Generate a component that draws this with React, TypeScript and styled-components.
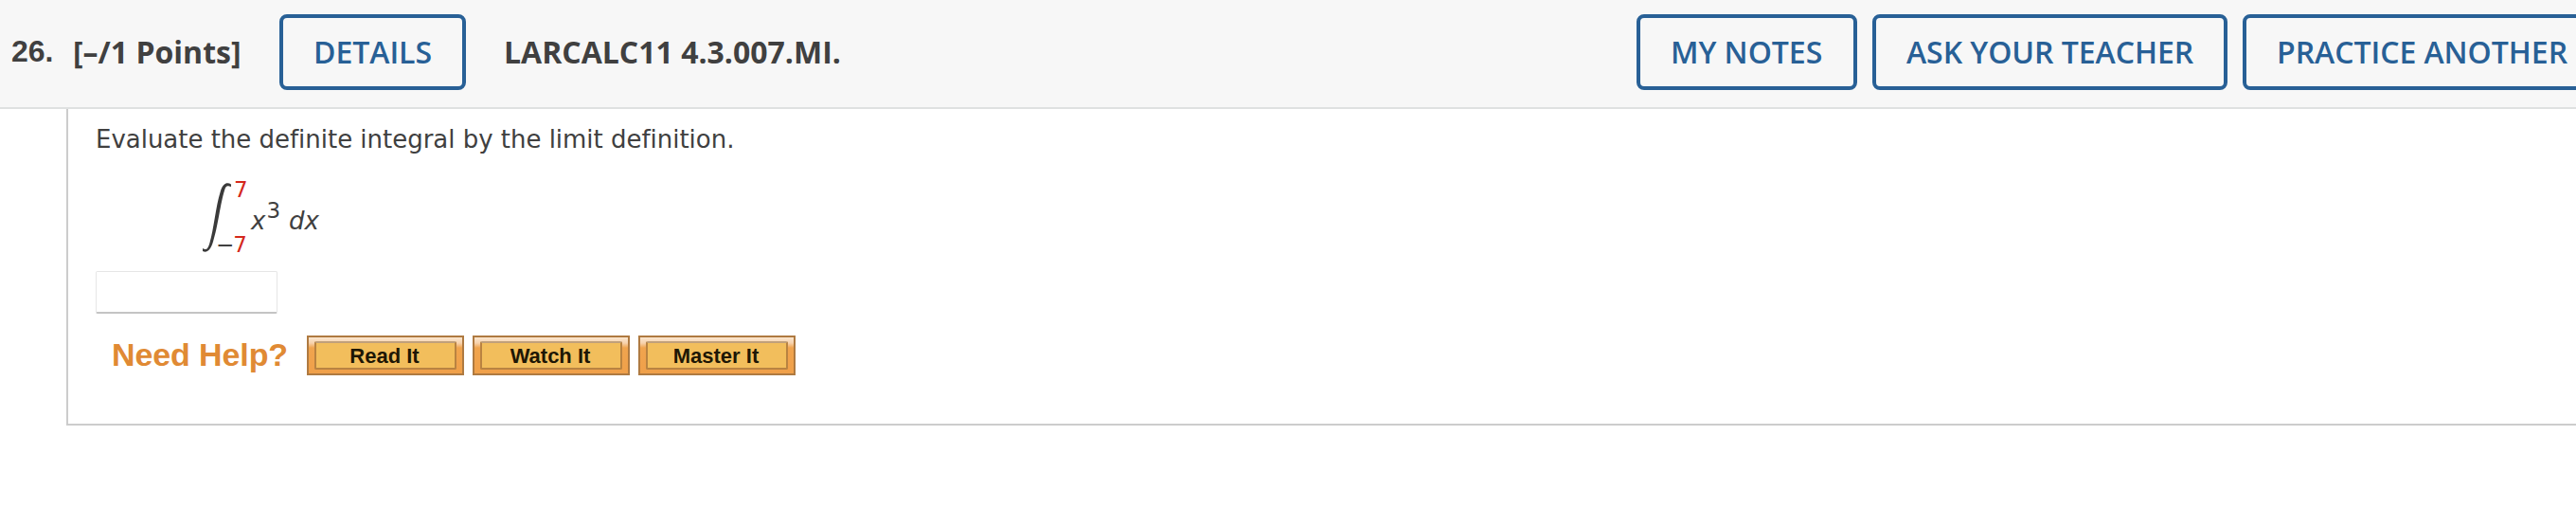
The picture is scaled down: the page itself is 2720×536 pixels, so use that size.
import React from "react";
import styled, { createGlobalStyle } from "styled-components";

const GlobalStyle = createGlobalStyle`
  html, body { margin: 0; background: #fff; overflow: hidden; }
  * { box-sizing: border-box; }
`;

const Page = styled.main`
  width: 2720px;
  height: 536px;
  overflow: hidden;
  color: #404040;
`;

const Header = styled.header`
  display: flex;
  align-items: flex-start;
  height: 115px;
  padding: 15px 0 0 12px;
  background: #f7f7f7;
  border-bottom: 2px solid #dfe1e1;
  font: 700 32px/80px "Open Sans", sans-serif;
  white-space: nowrap;
`;

const QuestionNumber = styled.span`
  width: 65px;
  font: 700 32px/78px "Liberation Sans", Arial, sans-serif;
`;

const Points = styled.span`
  width: 218px;
`;

const Source = styled.span`
  margin-left: 40px;
`;

const OutlineButton = styled.button<{ $width: number }>`
  flex: none;
  width: ${(p) => p.$width}px;
  height: 80px;
  padding: 0 0 0 32px;
  border: 4px solid #286096;
  border-radius: 8px;
  background: #f7f7f7;
  color: #286096;
  font: 600 32px/72px "Open Sans", sans-serif;
  letter-spacing: -0.04px;
  text-align: left;
  white-space: nowrap;
`;

const Actions = styled.nav`
  display: flex;
  gap: 16px;
  width: 992px;
  margin-left: auto;
`;

const Panel = styled.section`
  height: 334px;
  margin-left: 70px;
  padding: 16px 0 0 29px;
  border-left: 2px solid #ccc;
  border-bottom: 2px solid #ccc;
  font-family: "DejaVu Sans", Verdana, sans-serif;
`;

const Prompt = styled.p`
  margin: 0;
  font-size: 26px;
  line-height: 32px;
  letter-spacing: -0.02px;
  font-variant-ligatures: none;
`;

const Formula = styled.div`
  display: flex;
  height: 84px;
  margin: 25px 0 14px 112px;
  font-size: 26px;
`;

const Limits = styled.div`
  display: flex;
  flex-direction: column;
  justify-content: space-between;
  width: 21px;
  height: 82px;
  font-size: 23px;
  line-height: 24px;
`;

const Upper = styled.span`
  margin-left: 3px;
  color: #d4281c;
`;

const Lower = styled.span`
  margin-left: -16px;
  letter-spacing: -1px;
  b { font-weight: 400; color: #d4281c; }
`;

const Integrand = styled.span`
  padding-top: 29px;
  line-height: 32px;
  i { font-style: oblique; }
  sup { font-size: 23px; line-height: 0; vertical-align: 12px; margin: 0 9px 0 1px; }
`;

const Answer = styled.input`
  display: block;
  width: 192px;
  height: 45px;
  border: 1px solid #e6e6e6;
  border-bottom: 2px solid #c4c4c4;
  border-radius: 2px;
  outline: none;
`;

const HelpRow = styled.div`
  display: flex;
  align-items: center;
  gap: 9px;
  height: 42px;
  margin-top: 23px;
  font-family: "Liberation Sans", Arial, sans-serif;
`;

const HelpLabel = styled.span`
  width: 214px;
  padding: 0 0 2px 17px;
  color: #e08a34;
  font-size: 34px;
  font-weight: 700;
  line-height: 40px;
  letter-spacing: -0.1px;
`;

const HelpButton = styled.button`
  width: 166px;
  height: 42px;
  padding: 4px 6px;
  border: 2px solid #af7a41;
  background: linear-gradient(#fbe6cf 0, #f7d2ac 6px, #f0a44e 11px, #f0a04a 100%);
`;

const HelpFace = styled.span`
  display: block;
  height: 30px;
  padding-right: 2px;
  border: 2px solid #b98341;
  border-top-color: #c0a07a;
  border-radius: 2px;
  background: #f2be5c;
  color: #1e1705;
  font: 700 22px/28px "Liberation Sans", Arial, sans-serif;
  text-align: center;
`;

const headerActions = [
  { label: "MY NOTES", width: 233 },
  { label: "ASK YOUR TEACHER", width: 375 },
  { label: "PRACTICE ANOTHER", width: 382 },
];

const IntegralSign = () => (
  <svg width="31" height="84" viewBox="0 0 31 84" aria-hidden="true">
    <path
      d="M31 6.5L31 9C28 9 26 6 24 13C20 25 17 52 12 67C9 77 5 79 1 77L1 74C4 76 6.500 76 8.500 68C12.500 55 15 29 19.500 15C22 5 27 4 31 6.500Z"
      fill="#3a3a3a"
    />
  </svg>
);

export default function App() {
  return (
    <Page>
      <GlobalStyle />
      <Header>
        <QuestionNumber>26.</QuestionNumber>
        <Points>[–/1 Points]</Points>
        <OutlineButton $width={197}>DETAILS</OutlineButton>
        <Source>LARCALC11 4.3.007.MI.</Source>
        <Actions>
          {headerActions.map((a) => (
            <OutlineButton key={a.label} $width={a.width}>{a.label}</OutlineButton>
          ))}
        </Actions>
      </Header>
      <Panel>
        <Prompt>Evaluate the definite integral by the limit definition.</Prompt>
        <Formula>
          <IntegralSign />
          <Limits>
            <Upper>7</Upper>
            <Lower>−<b>7</b></Lower>
          </Limits>
          <Integrand><i>x</i><sup>3</sup><i>dx</i></Integrand>
        </Formula>
        <Answer aria-label="Answer" />
        <HelpRow>
          <HelpLabel>Need Help?</HelpLabel>
          {["Read It", "Watch It", "Master It"].map((label) => (
            <HelpButton key={label}><HelpFace>{label}</HelpFace></HelpButton>
          ))}
        </HelpRow>
      </Panel>
    </Page>
  );
}
